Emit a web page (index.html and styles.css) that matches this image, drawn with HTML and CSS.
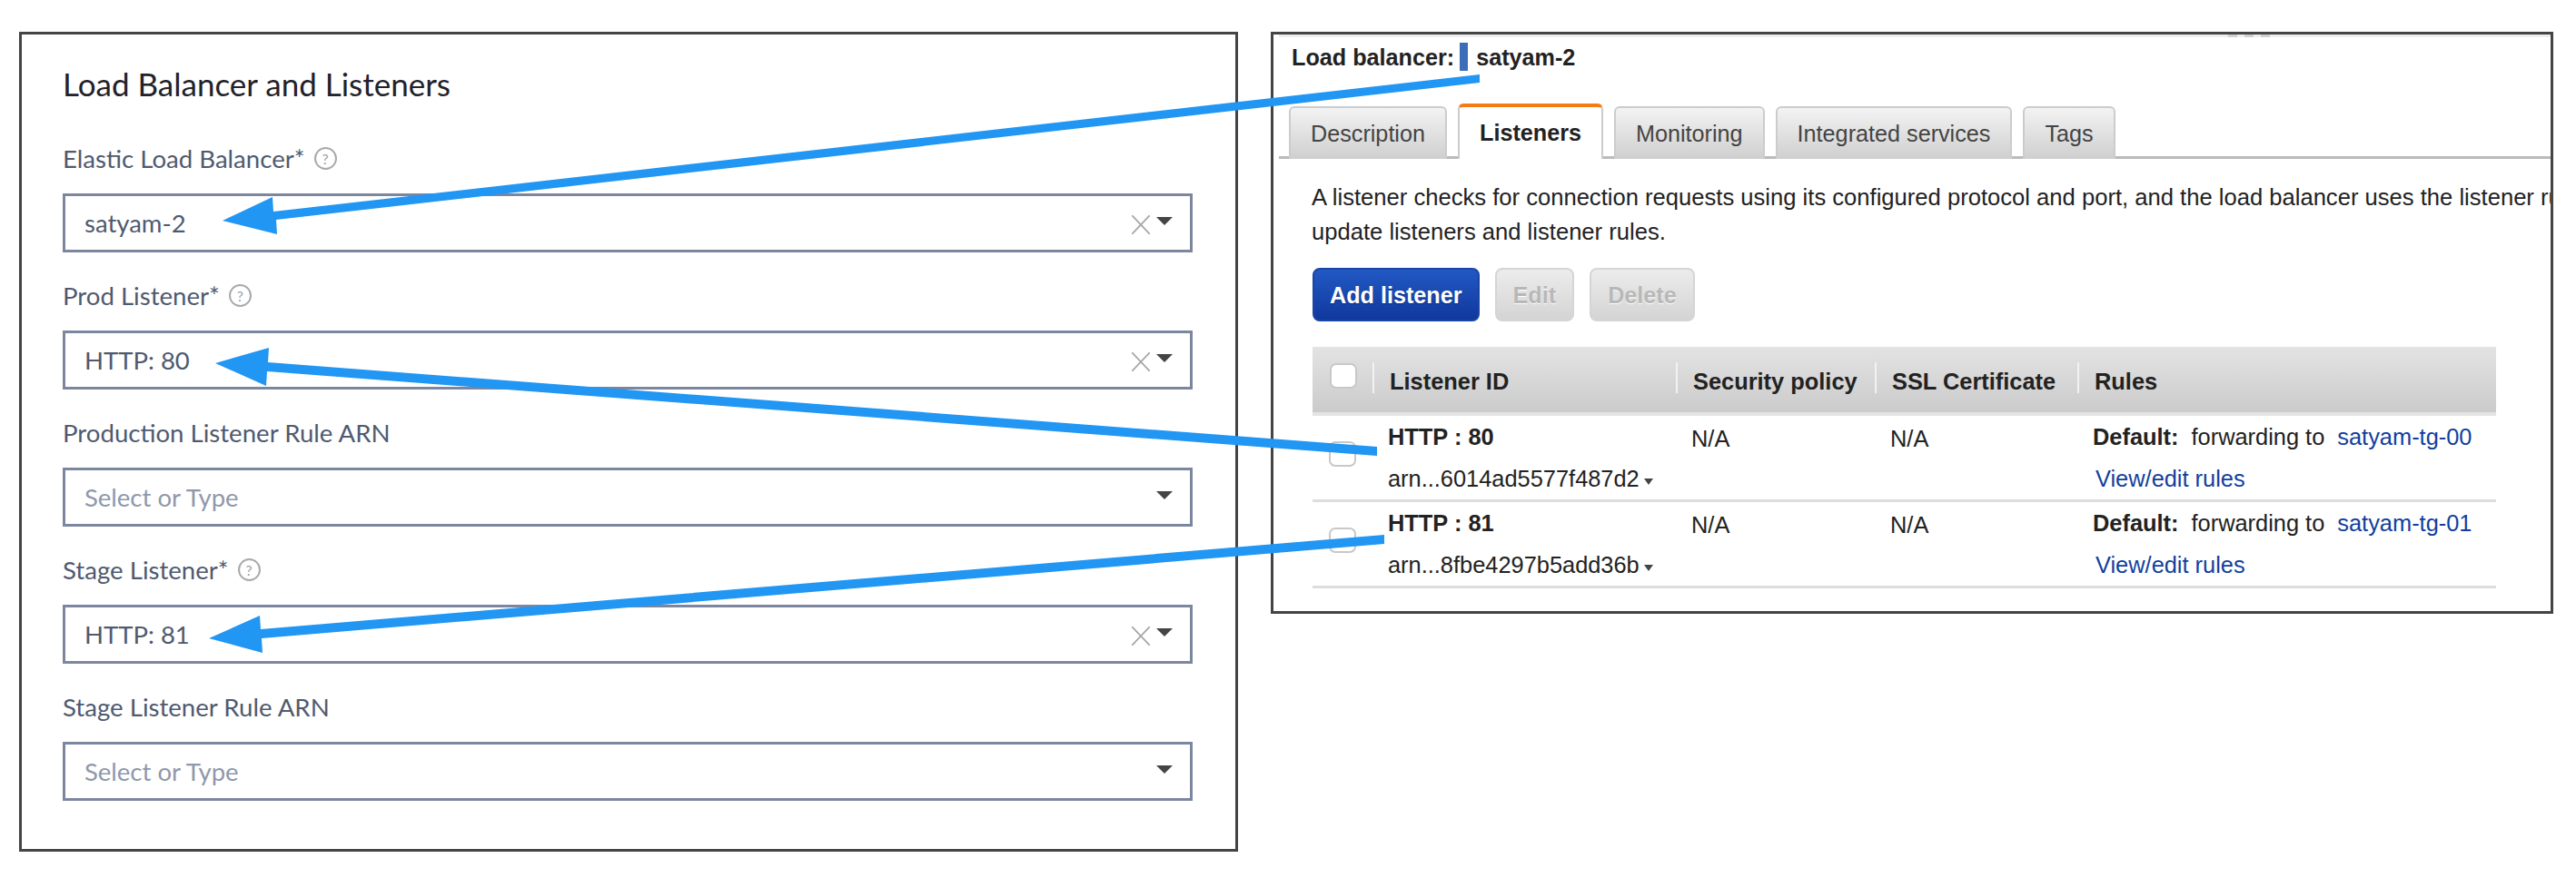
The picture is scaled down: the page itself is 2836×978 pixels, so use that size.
FILE: index.html
```html
<!DOCTYPE html>
<html lang="en">
<head>
  <meta charset="UTF-8" />
  <title>Load Balancer and Listeners</title>
  <link rel="stylesheet" href="styles.css">
</head>
<body>
  <div class="page">
    <section class="harness">
      <h2>Load Balancer and Listeners</h2>

      <div class="field">
        <label>Elastic Load Balancer* <span class="help">?</span></label>
        <div class="select">
          <span class="value">satyam-2</span>
          <svg class="clear" viewBox="0 0 20 21"><path d="M0 0L20 21M20 0L0 21"/></svg>
          <span class="caret"></span>
        </div>
      </div>

      <div class="field">
        <label>Prod Listener* <span class="help">?</span></label>
        <div class="select">
          <span class="value">HTTP: 80</span>
          <svg class="clear" viewBox="0 0 20 21"><path d="M0 0L20 21M20 0L0 21"/></svg>
          <span class="caret"></span>
        </div>
      </div>

      <div class="field">
        <label>Production Listener Rule ARN</label>
        <div class="select">
          <span class="placeholder">Select or Type</span>
          <span class="caret"></span>
        </div>
      </div>

      <div class="field">
        <label>Stage Listener* <span class="help">?</span></label>
        <div class="select">
          <span class="value">HTTP: 81</span>
          <svg class="clear" viewBox="0 0 20 21"><path d="M0 0L20 21M20 0L0 21"/></svg>
          <span class="caret"></span>
        </div>
      </div>

      <div class="field">
        <label>Stage Listener Rule ARN</label>
        <div class="select">
          <span class="placeholder">Select or Type</span>
          <span class="caret"></span>
        </div>
      </div>
    </section>

    <section class="console">
      <div class="strip"><i></i><i></i><i></i></div>
      <div class="lb-title">
        <b>Load balancer:</b>
        <span class="lb-mark"></span>
        <b>satyam-2</b>
      </div>

      <div class="tabs">
        <div class="tab">Description</div>
        <div class="tab active">Listeners</div>
        <div class="tab">Monitoring</div>
        <div class="tab">Integrated services</div>
        <div class="tab">Tags</div>
      </div>

      <p class="intro">A listener checks for connection requests using its configured protocol and port, and the load balancer uses the listener rules<br>update listeners and listener rules.</p>

      <div class="actions">
        <button class="btn primary">Add listener</button>
        <button class="btn" disabled>Edit</button>
        <button class="btn" disabled>Delete</button>
      </div>

      <table class="listeners">
        <colgroup>
          <col class="col-check"><col class="col-id"><col class="col-policy"><col class="col-cert"><col>
        </colgroup>
        <thead>
          <tr>
            <th class="check-head"><span class="check"></span></th>
            <th><div class="th-cell">Listener ID</div></th>
            <th><div class="th-cell">Security policy</div></th>
            <th><div class="th-cell">SSL Certificate</div></th>
            <th><div class="th-cell">Rules</div></th>
          </tr>
        </thead>
        <tbody>
          <tr>
            <td class="check-cell"><span class="check"></span></td>
            <td><b>HTTP : 80</b><br>arn...6014ad5577f487d2<span class="mini-caret"></span></td>
            <td class="na">N/A</td>
            <td class="na">N/A</td>
            <td><b>Default:</b><span class="fwd">forwarding to</span><a href="#">satyam-tg-00</a><br><a href="#" class="edit">View/edit rules</a></td>
          </tr>
          <tr>
            <td class="check-cell"><span class="check"></span></td>
            <td><b>HTTP : 81</b><br>arn...8fbe4297b5add36b<span class="mini-caret"></span></td>
            <td class="na">N/A</td>
            <td class="na">N/A</td>
            <td><b>Default:</b><span class="fwd">forwarding to</span><a href="#">satyam-tg-01</a><br><a href="#" class="edit">View/edit rules</a></td>
          </tr>
        </tbody>
      </table>
    </section>

    <!-- arrows drawn on top of both panels -->
    <svg class="arrows" viewBox="0 0 2836 978">
      <polygon points="1629,82 1629,91 304,242 305,258 245,243 300,217 301,233"/>
      <polygon points="1516,492 1516,502 294,409 293,425 237,400 296,383 295,399"/>
      <polygon points="1524,589 1524,599 288,703 289,719 230,703 286,678 287,693"/>
    </svg>
  </div>
</body>
</html>
```

FILE: styles.css
```css
* {
  box-sizing: border-box;
}
html, body {
  margin: 0;
  height: 978px;
  overflow: hidden;
  background: #fff;
}
.page {
  position: relative;
  display: flex;
  align-items: flex-start;
  gap: 36px;
  padding: 35px 0 0 21px;
  height: 978px;
}
.arrows {
  position: absolute;
  left: 0;
  top: 0;
  width: 2836px;
  height: 978px;
}
.arrows polygon {
  fill: #2196f3;
}

/* left panel */
.harness {
  width: 1342px;
  height: 903px;
  border: 3px solid #444;
  padding: 34px 47px 0 45px;
  font-family: Lato, "Open Sans", sans-serif;
}
.harness h2 {
  margin: 0 0 43px;
  font-size: 35px;
  line-height: 40px;
  font-weight: 400;
  color: #22222a;
}
.field {
  margin-bottom: 28px;
}
.field label {
  display: flex;
  align-items: center;
  gap: 10px;
  height: 38px;
  margin-bottom: 20px;
  font-size: 27.6px;
  color: #4f5a70;
}
.help {
  display: inline-block;
  width: 25px;
  height: 25px;
  border: 2px solid #a9a9a9;
  border-radius: 50%;
  font-size: 16px;
  line-height: 21px;
  text-align: center;
  color: #a0a0a0;
}
.select {
  display: flex;
  align-items: center;
  height: 65px;
  border: 3px solid #7c879f;
  padding: 0 19px 0 21px;
  font-size: 27.5px;
}
.value {
  color: #4f5a70;
  flex: 1;
}
.placeholder {
  color: #8f98ab;
  flex: 1;
}
.clear {
  width: 20px;
  height: 21px;
  margin: 3px 7px 0 0;
}
.clear path {
  stroke: #a6a6a6;
  stroke-width: 1.8;
  fill: none;
}
.caret {
  width: 0;
  height: 0;
  margin-bottom: 4px;
  border-left: 9px solid transparent;
  border-right: 9px solid transparent;
  border-top: 9px solid #444;
}

/* right panel */
.console {
  width: 1412px;
  height: 641px;
  border: 3px solid #444;
  overflow: hidden;
  font-family: "Liberation Sans", Arial, sans-serif;
  font-size: 25.4px;
  color: #222;
}
.strip {
  display: flex;
  gap: 8px;
  height: 3px;
  margin: 0 0 6px 6px;
  padding-left: 1045px;
  background: #eee;
}
.strip i {
  width: 10px;
  background: #d0d0d0;
}
.lb-title {
  display: flex;
  align-items: center;
  gap: 6px;
  height: 31px;
  margin-left: 20px;
  font-size: 25.2px;
  line-height: 34px;
}
.lb-mark {
  width: 9px;
  height: 31px;
  margin-right: 3px;
  background: #3b6db8;
}
.tabs {
  display: flex;
  align-items: flex-end;
  gap: 12px;
  height: 61px;
  margin: 36px 0 0 6px;
  padding-left: 11px;
  border-bottom: 3px solid #bbb;
  font-size: 25.2px;
}
.tab {
  height: 58px;
  margin-bottom: -3px;
  padding: 0 22px;
  border: 2px solid #ccc;
  border-bottom: none;
  border-radius: 6px 6px 0 0;
  background: linear-gradient(#f3f3f3, #cfcfcf);
  line-height: 56px;
  color: #444;
}
.tab.active {
  height: 61px;
  border-top: 4px solid #f57c14;
  background: #fff;
  font-weight: bold;
  color: #222;
}
.intro {
  margin: 23px 0 21px 42px;
  font-size: 25.6px;
  line-height: 38px;
  white-space: nowrap;
}
.actions {
  display: flex;
  gap: 17px;
  margin-left: 43px;
}
.btn {
  height: 59px;
  padding: 2px 18px 0;
  border: 2px solid #d5d5d5;
  border-radius: 8px;
  background: linear-gradient(#ececec, #d4d4d4);
  font-family: inherit;
  font-size: 25.2px;
  font-weight: bold;
  color: #b8b8b8;
  text-shadow: 0 1px 0 #fff;
}
.btn.primary {
  padding: 2px 17px 0;
  border-color: #1a45a5;
  background: linear-gradient(#2259c4, #10389d);
  color: #fff;
  text-shadow: 0 1px 1px #0b2a78;
}
.listeners {
  width: 1303px;
  margin: 28px 0 0 43px;
  border-collapse: collapse;
  table-layout: fixed;
}
.col-check {
  width: 66px;
}
.col-id {
  width: 334px;
}
.col-policy {
  width: 219px;
}
.col-cert {
  width: 223px;
}
.listeners th {
  height: 74px;
  padding: 0 0 4px;
  border-bottom: 4px solid #e4e4e4;
  background: linear-gradient(#e3e3e3, #cbcbcb);
  text-align: left;
  font-weight: bold;
}
.th-cell {
  height: 34px;
  padding-left: 17px;
  border-left: 2px solid #f2f2f2;
  line-height: 43px;
}
.check {
  display: block;
  width: 30px;
  height: 28px;
  border: 2px solid #c8c8c8;
  border-radius: 7px;
  background: #fff;
}
.listeners th.check-head {
  padding: 0 0 8px 19px;
}
.listeners td {
  height: 94px;
  padding: 0 0 0 17px;
  border-bottom: 3px solid #ddd;
  vertical-align: top;
  line-height: 46px;
}
.listeners td.check-cell {
  padding: 28px 0 0 18px;
}
.listeners td.na {
  padding-top: 2px;
}
.fwd {
  margin: 0 14px;
}
.listeners a {
  color: #123f9e;
  text-decoration: none;
}
.listeners a.edit {
  margin-left: 3px;
}
.mini-caret {
  display: inline-block;
  width: 0;
  height: 0;
  margin-left: 5px;
  vertical-align: 2px;
  border-left: 5px solid transparent;
  border-right: 5px solid transparent;
  border-top: 7px solid #444;
}
```
